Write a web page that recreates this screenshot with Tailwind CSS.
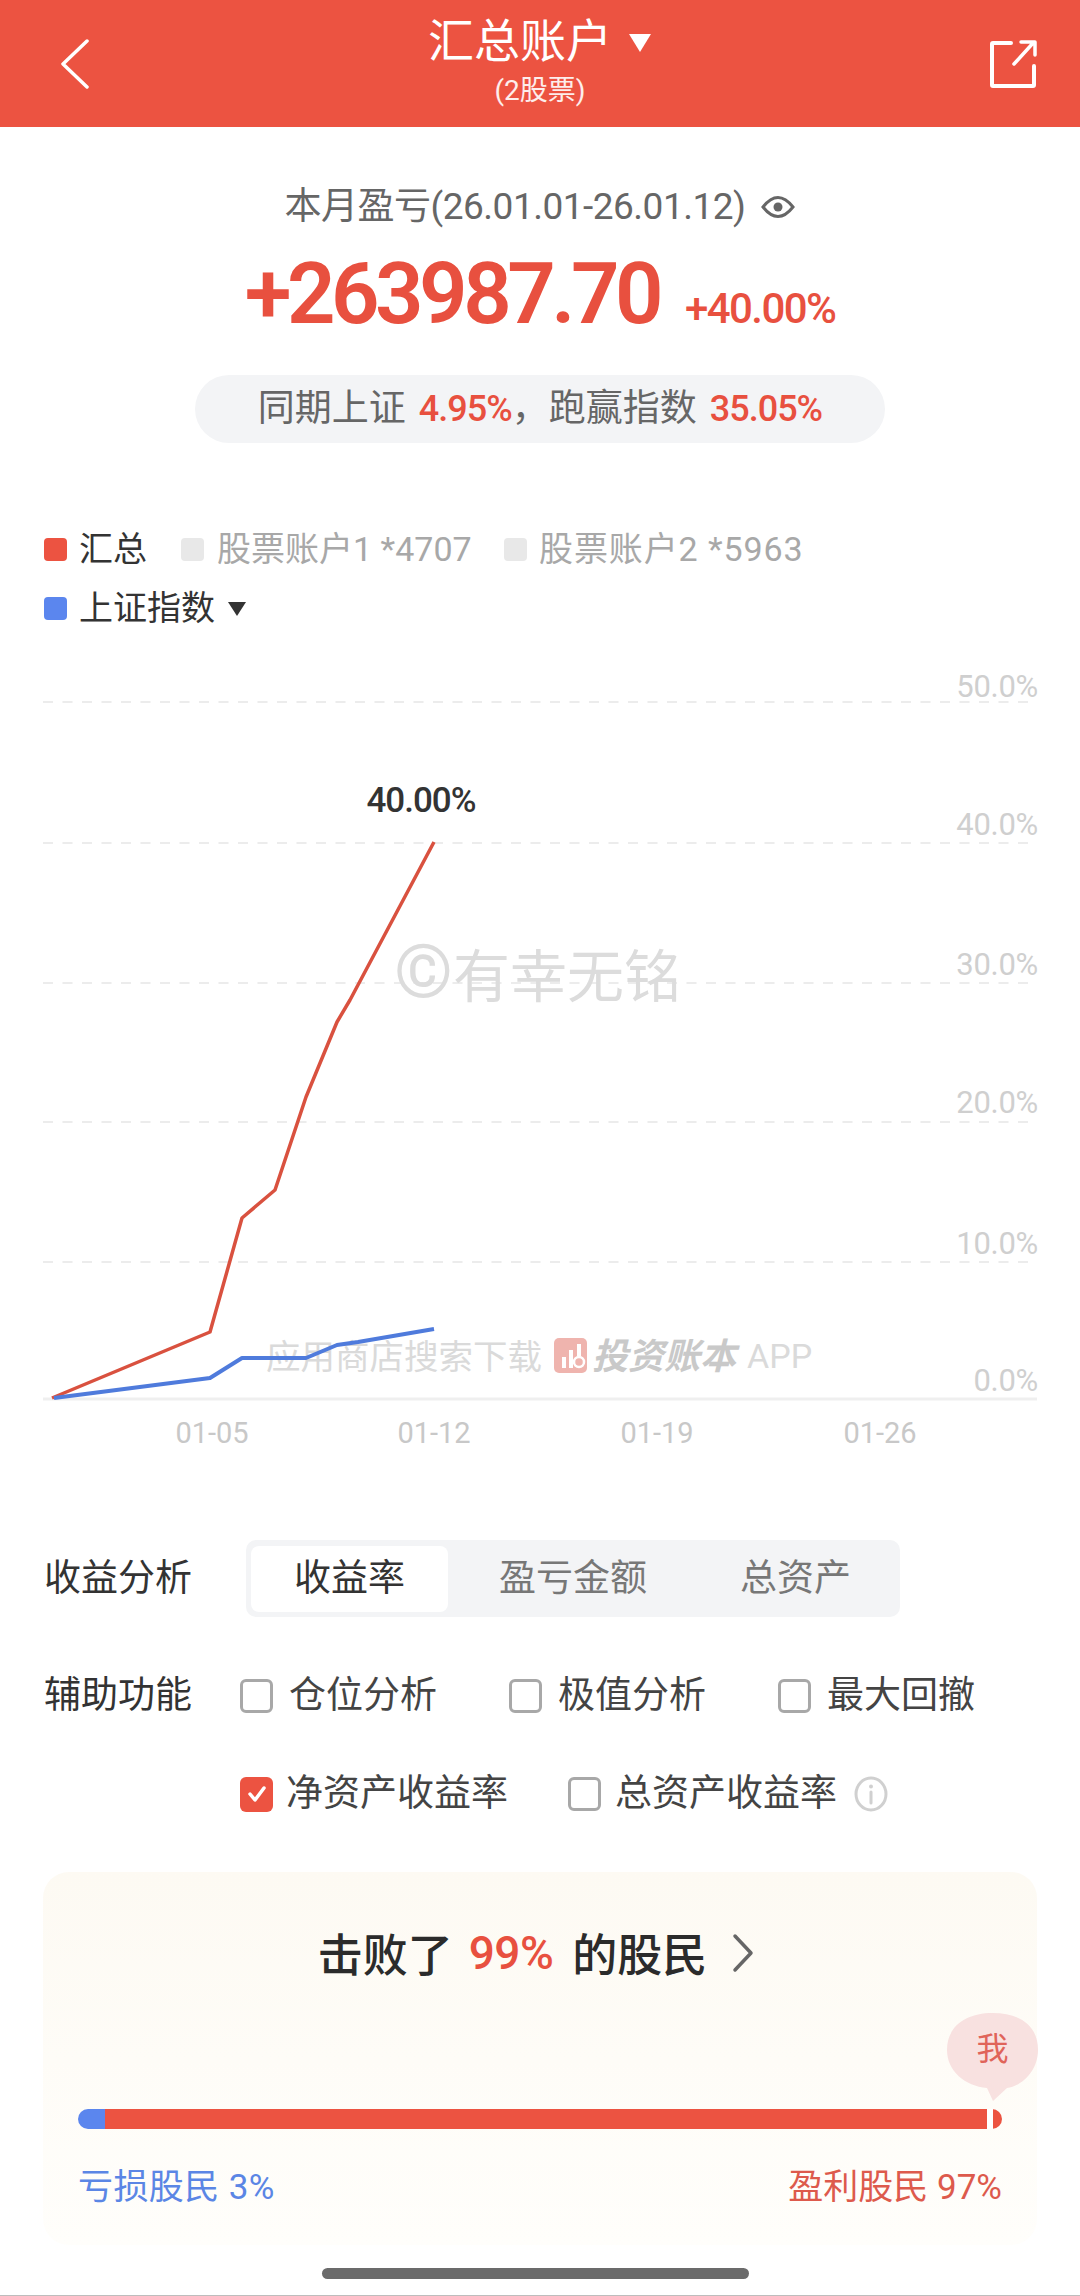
<!DOCTYPE html>
<html lang="zh">
<head>
<meta charset="utf-8">
<script src="https://cdn.jsdelivr.net/npm/@tailwindcss/browser@4"></script>
</head>
<body class="bg-white">
<div class="w-[1080px] h-[2296px] bg-white overflow-hidden relative flex flex-col whitespace-nowrap font-['Roboto','Noto_Sans_CJK_SC',sans-serif] border-b border-[#bdbdbd]">
  <!-- Header -->
  <header class="h-[127px] shrink-0 bg-[#ec5341] relative flex items-center justify-between pl-[60px] pr-[42px] text-white">
    <svg class="w-[30px] h-[50px]" viewBox="0 0 30 50" fill="none" stroke="#fff" stroke-width="3.5" stroke-linecap="round" stroke-linejoin="round"><path d="M27 2 L3 25 L27 48"/></svg>
    <div class="absolute left-0 right-0 top-0 flex flex-col items-center">
      <div class="h-[60px] mt-[11px] flex items-center text-[46px] leading-none">
        <span>汇总账户</span>
        <svg class="w-[24px] h-[20px] ml-[16px] mt-[3px]" viewBox="0 0 24 20" fill="#fff"><path d="M1 1 H23 L12 19 Z"/></svg>
      </div>
      <div class="text-[28px] leading-[40px] text-white/90">(2股票)</div>
    </div>
    <svg class="w-[48px] h-[50px]" viewBox="0 0 48 50" fill="none" stroke="#fff" stroke-width="4" stroke-linecap="round" stroke-linejoin="round"><path d="M21 4 H3 Q2 4 2 5 V46 Q2 47 3 47 H43 Q44 47 44 46 V27"/><path d="M24 25 L44 3 M31 3 H45 V16" stroke-width="3.5"/></svg>
  </header>

  <!-- Summary -->
  <div class="mt-[55px] h-[50px] flex items-center justify-center text-[37px] text-[#666]">
    <span class="tracking-[-0.5px]">本月盈亏(26.01.01-26.01.12)</span>
    <svg class="w-[34px] h-[26px] ml-[16px]" viewBox="0 0 34 26" fill="none" stroke="#666" stroke-width="3"><path d="M2 13 Q17 -6 32 13 Q17 32 2 13 Z"/><circle cx="17" cy="13" r="4.5" fill="#666" stroke="none"/></svg>
  </div>
  <div class="mt-[17px] h-[90px] flex items-end justify-center text-[#e8503f]">
    <span class="text-[85px] leading-[90px] font-semibold tracking-[-4.5px]">+263987.70</span>
    <span class="text-[42px] leading-[60px] ml-[26px] font-medium tracking-[-1.6px]">+40.00%</span>
  </div>
  <div class="mt-[36px] mx-auto w-[690px] h-[68px] rounded-full bg-[#f3f4f6] flex items-center justify-center text-[37px] text-[#666]">
    <span>同期上证</span>
    <span class="ml-[13px] text-[#e8503f] font-medium text-[36px] tracking-[-1px]">4.95%</span>
    <span class="w-[37px]">，</span>
    <span>跑赢指数</span>
    <span class="ml-[13px] text-[#e8503f] font-medium text-[36px] tracking-[-1px]">35.05%</span>
  </div>

  <!-- Legend -->
  <div class="mt-[86px] pl-[44px] h-[40px] flex items-center text-[34px]">
    <span class="w-[23px] h-[23px] rounded-[4px] bg-[#ec5341]"></span>
    <span class="ml-[12px] w-[102px] text-[#333]">汇总</span>
    <span class="w-[23px] h-[23px] rounded-[4px] bg-[#e8e8e8]"></span>
    <span class="ml-[13px] w-[287px] text-[#a8a8a8]">股票账户1 *4707</span>
    <span class="w-[23px] h-[23px] rounded-[4px] bg-[#e8e8e8]"></span>
    <span class="ml-[12px] text-[#a8a8a8] tracking-[0.9px]">股票账户2 *5963</span>
  </div>
  <div class="mt-[19px] pl-[44px] h-[40px] flex items-center text-[34px]">
    <span class="w-[23px] h-[23px] rounded-[4px] bg-[#5b86ee]"></span>
    <span class="ml-[12px] text-[#333]">上证指数</span>
    <svg class="w-[20px] h-[14px] ml-[12px] mt-[2px]" viewBox="0 0 20 14" fill="#333"><path d="M1 0 H19 L10 14 Z"/></svg>
  </div>

  <!-- Chart -->
  <div class="mt-[12px] h-[820px] relative shrink-0">
    <svg class="absolute inset-0 w-[1080px] h-[820px]" viewBox="0 640 1080 820" font-family="Roboto, 'Noto Sans CJK SC', sans-serif">
      <g stroke="#ececec" stroke-width="2" stroke-dasharray="10 9.5">
        <path d="M43 702 H1037"/><path d="M43 843 H1037"/><path d="M43 983 H1037"/><path d="M43 1122 H1037"/><path d="M43 1262 H1037"/>
      </g>
      <path d="M43 1399 H1037" stroke="#efefef" stroke-width="3"/>
      <g font-size="31" fill="#cfcfcf" text-anchor="end" letter-spacing="-0.3">
        <text x="1038" y="697">50.0%</text><text x="1038" y="835">40.0%</text><text x="1038" y="975">30.0%</text><text x="1038" y="1113">20.0%</text><text x="1038" y="1254">10.0%</text><text x="1038" y="1391">0.0%</text>
      </g>
      <g font-size="29" fill="#c8c8c8" text-anchor="middle">
        <text x="212" y="1443">01-05</text><text x="434" y="1443">01-12</text><text x="657" y="1443">01-19</text><text x="880" y="1443">01-26</text>
      </g>
      <text x="394" y="997" font-size="57" fill="#dcdcdc"><tspan font-size="75">©</tspan>有幸无铭</text>
      <text x="266" y="1369" font-size="34.5" fill="#dadada">应用商店搜索下载</text>
      <rect x="554" y="1338" width="33" height="35" rx="5" fill="#efb4ae"/>
      <g fill="#fff"><rect x="562" y="1357" width="4" height="11"/><rect x="569" y="1350" width="4" height="18"/><circle cx="579" cy="1362" r="5" fill="none" stroke="#fff" stroke-width="2.5"/><rect x="577" y="1344" width="4" height="12"/></g>
      <text x="592" y="1369" font-size="36" font-weight="700" font-style="italic" fill="#c9c9c9">投资账本</text>
      <text x="747" y="1368" font-size="34" fill="#dadada">APP</text>
      <polyline points="52,1398 210,1332 242,1218 275,1190 306,1097 337,1022 350,1000 434,842" fill="none" stroke="#d9513f" stroke-width="3.5" stroke-linejoin="round"/>
      <polyline points="54,1398 210,1378 242,1358 306,1358 337,1345 358,1342 434,1329" fill="none" stroke="#4f7bdc" stroke-width="4" stroke-linejoin="round"/>
      <text x="421" y="812" font-size="35" font-weight="500" fill="#333" text-anchor="middle" letter-spacing="-1">40.00%</text>
    </svg>
  </div>

  <!-- Controls -->
  <div class="mt-[80px] h-[77px] pl-[44px] flex items-center text-[37px]">
    <span class="w-[202px] text-[#333]">收益分析</span>
    <div class="w-[654px] h-[77px] rounded-[10px] bg-[#f3f4f6] flex items-center pl-[5px] pt-0">
      <span class="w-[197px] h-[66px] rounded-[8px] bg-white flex items-center justify-center text-[#333]">收益率</span>
      <span class="w-[250px] text-center text-[#777]">盈亏金额</span>
      <span class="w-[195px] text-center text-[#777]">总资产</span>
    </div>
  </div>
  <div class="mt-[59px] h-[40px] pl-[44px] flex items-center text-[37px] text-[#444]">
    <span class="w-[196px] text-[#333]">辅助功能</span>
    <span class="w-[33px] h-[34px] rounded-[6px] border-[3px] border-[#a8a8a8]"></span>
    <span class="ml-[16px] w-[148px]">仓位分析</span>
    <span class="ml-[72px] w-[33px] h-[34px] rounded-[6px] border-[3px] border-[#a8a8a8]"></span>
    <span class="ml-[16px] w-[148px]">极值分析</span>
    <span class="ml-[72px] w-[33px] h-[34px] rounded-[6px] border-[3px] border-[#a8a8a8]"></span>
    <span class="ml-[16px]">最大回撤</span>
  </div>
  <div class="mt-[58px] h-[40px] pl-[240px] flex items-center text-[37px] text-[#444]">
    <span class="w-[33px] h-[35px] rounded-[6px] bg-[#ec5341] flex items-center justify-center">
      <svg class="w-[20px] h-[18px]" viewBox="0 0 20 18" fill="none" stroke="#fff" stroke-width="3.5" stroke-linecap="round" stroke-linejoin="round"><path d="M3 9 L8 15 L17 3"/></svg>
    </span>
    <span class="ml-[13px] w-[222px]">净资产收益率</span>
    <span class="ml-[60px] w-[33px] h-[34px] rounded-[6px] border-[3px] border-[#a8a8a8]"></span>
    <span class="ml-[14px] w-[222px]">总资产收益率</span>
    <svg class="ml-[17px] w-[34px] h-[36px]" viewBox="0 0 34 36" fill="none" stroke="#d0d0d0" stroke-width="3"><ellipse cx="17" cy="18" rx="15" ry="16"/><path d="M17 16 V27" stroke-linecap="round"/><circle cx="17" cy="10.5" r="2" fill="#d0d0d0" stroke="none"/></svg>
  </div>

  <!-- Card -->
  <div class="mt-[58px] mx-[43px] h-[373px] rounded-[26px] bg-gradient-to-b from-[#fdfaf3] to-[#fffefb] relative shrink-0">
    <div class="pt-[56px] pr-[8px] h-[50px] flex items-center justify-center text-[45px] font-medium text-[#2b2b2b] box-content">
      <span class="font-['Noto_Sans_CJK_SC',sans-serif]">击败了</span>
      <span class="ml-[16px] text-[46px] text-[#e8503f] tracking-[-0.5px]">99%</span>
      <span class="ml-[19px] font-['Noto_Sans_CJK_SC',sans-serif]">的股民</span>
      <svg class="ml-[25px] w-[22px] h-[40px]" viewBox="0 0 22 40" fill="none" stroke="#666" stroke-width="3.5" stroke-linecap="round" stroke-linejoin="round"><path d="M3 3 L19 20 L3 37"/></svg>
    </div>
    <div class="absolute left-[904px] top-[141px] w-[91px] h-[88px]">
      <svg class="absolute inset-0 w-[91px] h-[88px]" viewBox="0 0 91 88" fill="#f8e1e0"><path d="M45.5 0 C75 0 91 14 91 37 C91 58 75 73 60 75 L46 88 L40 75 C18 73 0 58 0 37 C0 14 18 0 45.5 0 Z"/></svg>
      <span class="absolute inset-x-0 top-[14px] text-center text-[32px] leading-[44px] text-[#e0645a]">我</span>
    </div>
    <div class="absolute left-[35px] top-[237px] w-[924px] h-[20px] rounded-full overflow-hidden flex">
      <span class="w-[27px] bg-[#5b86ee]"></span>
      <span class="w-[882px] bg-[#ec5341]"></span>
      <span class="w-[6px] bg-white"></span>
      <span class="flex-1 bg-[#ec5341]"></span>
    </div>
    <div class="absolute left-[35px] right-[35px] top-[294px] h-[44px] flex items-center justify-between text-[35px]">
      <span class="text-[#5b86e5] tracking-[0.4px]">亏损股民 3%</span>
      <span class="text-[#dd5a4c]">盈利股民 97%</span>
    </div>
  </div>

  <div class="mt-[23px] ml-[322px] w-[427px] h-[11px] shrink-0 rounded-full bg-[#6b6b6b]"></div>
</div>
</body>
</html>
